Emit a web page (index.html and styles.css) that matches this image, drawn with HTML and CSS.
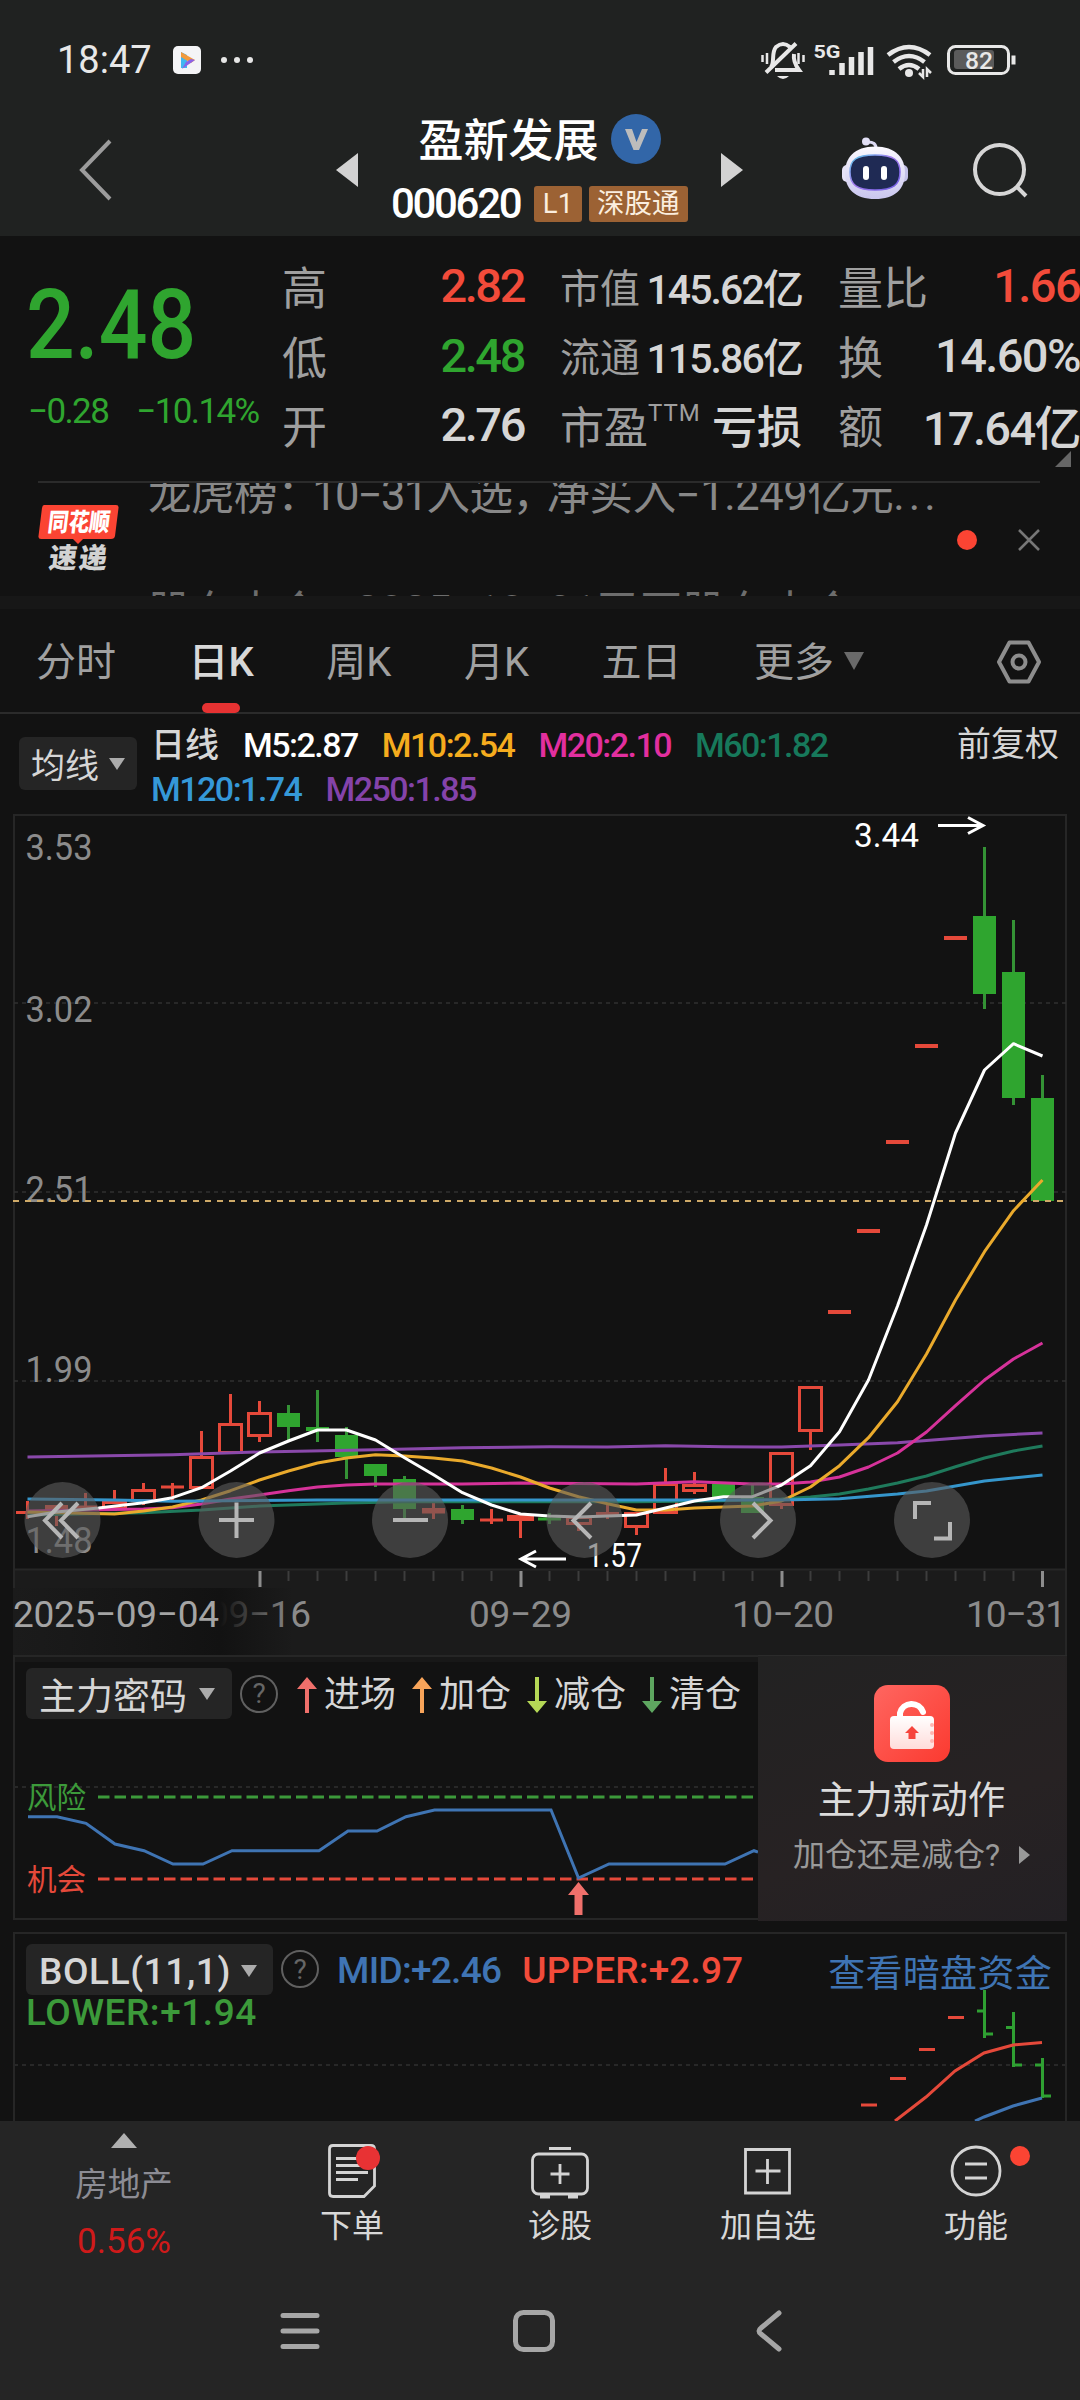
FILE: index.html
```html
<!DOCTYPE html>
<html lang="zh-CN">
<head>
<meta charset="utf-8">
<title>盈新发展 000620</title>
<link rel="stylesheet" href="styles.css">
</head>
<body>
<header class="top">
  <div class="status">
    <span class="clock">18:47</span>
    <svg class="app-icon" width="28" height="28" viewBox="0 0 28 28"><rect width="28" height="28" rx="5" fill="#f4f4f6"/><path d="M8 6L14 9V22L8 22Z" fill="#41b7f0"/><path d="M8 6L22 14L18 17L8 11Z" fill="#f29a3c"/><path d="M22 14L9 23L13 16L18 13Z" fill="#8b62e8"/></svg>
    <svg width="34" height="8" viewBox="0 0 34 8" fill="#e6e6e6"><circle cx="4" cy="4" r="3"/><circle cx="17" cy="4" r="3"/><circle cx="30" cy="4" r="3"/></svg>
    <svg class="status-icons" width="260" height="44" viewBox="760 38 260 44" fill="none" stroke="#e8e8e8">
      <path d="M771 67C775 62 771 53 776 47Q783 41 790 47M794 54C793 61 796 66 799 70H775" stroke-width="4"/>
      <path d="M766 72.500L796 43.500" stroke-width="4"/>
      <path d="M762.500 55V62M767 53V64M798.500 53V64M803.500 55V62" stroke-width="2.500"/>
      <path d="M777 76H789Q783 82 777 76Z" fill="#e8e8e8" stroke="none"/>
      <text x="813.500" y="57.500" class="net" textLength="27" lengthAdjust="spacingAndGlyphs">5G</text>
      <path d="M832 75V70M842 75V63M851.500 75V57M861 75V52M870.500 75V47" stroke-width="5.500"/>
      <path d="M888 55Q909 39 930 55M893.500 62Q909 50 924.500 62M899 69Q909 61 919 69" stroke-width="4.500"/>
      <circle cx="909" cy="73" r="4" fill="#e8e8e8" stroke="none"/>
      <path d="M923 69V77L919 73M927 77V69L931 73" stroke-width="2.500"/>
      <rect x="948.500" y="46.500" width="60" height="27" rx="7" stroke-width="3"/>
      <rect x="954" y="50" width="40" height="19" rx="3" fill="#5b5b5b" stroke="none"/>
      <path d="M1013.500 55.500V64.500" stroke-width="4"/>
      <text x="965" y="68.500" class="battery" textLength="28" lengthAdjust="spacingAndGlyphs">82</text>
    </svg>
  </div>
  <div class="titlebar">
    <svg class="back" width="36" height="62" viewBox="0 0 36 62" fill="none" stroke="#9c9c9c" stroke-width="4"><path d="M32 2L4 31L32 60"/></svg>
    <svg class="prev" width="22" height="34" viewBox="0 0 22 34"><path d="M22 0V34L0 17Z" fill="#d2d2d2"/></svg>
    <div class="stock">
      <div class="stock-name"><span>盈新发展</span><svg width="50" height="50" viewBox="0 0 50 50"><circle cx="25" cy="25" r="25" fill="#3266a8"/><path d="M14 15H21L25.500 28L31 15H37L28 36H22.500Z" fill="#bcbcbc"/></svg></div>
      <div class="stock-code"><span class="code">000620</span><span class="tag">L1</span><span class="tag">深股通</span></div>
    </div>
    <svg class="next" width="22" height="34" viewBox="0 0 22 34"><path d="M0 0V34L22 17Z" fill="#d2d2d2"/></svg>
    <svg class="robot" width="68" height="64" viewBox="841 136 68 64">
      <defs>
        <linearGradient id="shell" x1="0" y1="0" x2="0" y2="1"><stop offset="0" stop-color="#fbf9ff"/><stop offset="1" stop-color="#c9c6ee"/></linearGradient>
        <linearGradient id="rim" x1="0" y1="0" x2="1" y2="1"><stop offset="0" stop-color="#55c9e8"/><stop offset=".45" stop-color="#a57bf0"/><stop offset="1" stop-color="#6a5ae0"/></linearGradient>
      </defs>
      <path d="M866 141Q877 140 876 149" fill="none" stroke="#dcdaf3" stroke-width="3"/><circle cx="866" cy="140.500" r="4" fill="#e2e0f6"/>
      <rect x="842" y="164" width="10" height="17" rx="5" fill="#e6e3f8"/><rect x="898" y="164" width="10" height="17" rx="5" fill="#c3c0e8"/>
      <path d="M875 145.500C896 145.500 905 157 905 172C905 188 895 198 875 198C855 198 845 188 845 172C845 157 854 145.500 875 145.500Z" fill="url(#shell)"/>
      <path d="M875 154C894 154 900 159 900 171C900 184 893 189 875 189C857 189 850 184 850 171C850 159 856 154 875 154Z" fill="#1f2a54" stroke="url(#rim)" stroke-width="1.500"/>
      <rect x="863" y="165" width="6" height="14" rx="3" fill="#fff"/><rect x="881" y="165" width="6" height="14" rx="3" fill="#fff"/>
    </svg>
    <svg class="search" width="56" height="56" viewBox="972 141 56 56" fill="none" stroke="#d6d6d6" stroke-width="4"><circle cx="999.500" cy="168.500" r="24.500"/><path d="M1016 185L1026 195"/></svg>
  </div>
</header>

<section class="quote">
  <div class="price"><div class="last">2.48</div><div class="change"><span>−0.28</span><span>−10.14%</span></div></div>
  <dl class="stats">
    <div><dt>高</dt><dd class="up">2.82</dd></div>
    <div><dt>低</dt><dd class="down">2.48</dd></div>
    <div><dt>开</dt><dd>2.76</dd></div>
  </dl>
  <dl class="stats compact">
    <div><dt>市值</dt><dd>145.62亿</dd></div>
    <div><dt>流通</dt><dd>115.86亿</dd></div>
    <div><dt class="pe">市盈<sup>TTM</sup></dt><dd class="loss">亏损</dd></div>
  </dl>
  <dl class="stats wide">
    <div><dt>量比</dt><dd class="up">1.66</dd></div>
    <div><dt>换</dt><dd>14.60%</dd></div>
    <div><dt>额</dt><dd>17.64亿</dd></div>
  </dl>
  <i class="corner"></i>
</section>

<section class="news">
  <svg class="news-logo" width="84" height="70" viewBox="38 504 84 70">
    <path d="M45 505H117Q120 505 119.500 508L116 536Q115.500 539 112 539H84L79 544L74 539H42Q39 539 39.500 536L43 508Q43.500 505 45 505Z" fill="#fb4433"/>
    <text class="logo-a" transform="translate(48 531) skewX(-7)" textLength="62" lengthAdjust="spacingAndGlyphs">同花顺</text>
    <text class="logo-b" transform="translate(49 568) skewX(-7)" textLength="58">速递</text>
  </svg>
  <div class="ticker"><p>龙虎榜<span class="colon">：</span><span class="date">10−31</span>入选<span class="comma">，</span>净买入−1.249亿元<span class="ellipsis">...</span></p><p class="incoming">股东大会<span class="colon">：</span>2025−10−31召开股东大会</p></div>
  <i class="dot"></i>
  <svg width="22" height="22" viewBox="0 0 22 22" stroke="#777" stroke-width="2.500"><path d="M1 1L21 21M21 1L1 21"/></svg>
</section>

<nav class="tabs">
  <span>分时</span><span class="active">日K</span><span>周K</span><span>月K</span><span>五日</span><span class="more">更多<i class="caret"></i></span>
  <svg class="settings" width="46" height="44" viewBox="0 0 46 44" fill="none" stroke="#8d8d8d" stroke-width="4"><path d="M13.500 2.500H32.500L43 22L32.500 41.500H13.500L3 22Z" stroke-linejoin="round"/><circle cx="23" cy="22" r="6.500"/></svg>
</nav>

<section class="ma">
  <button class="pill">均线<i class="caret"></i></button>
  <div class="ma-list">
    <span class="c-day">日线</span><span class="c5">M5:2.87</span><span class="c10">M10:2.54</span><span class="c20">M20:2.10</span><span class="c60">M60:1.82</span>
    <span class="c120">M120:1.74</span><span class="c250">M250:1.85</span>
  </div>
  <span class="adjust">前复权</span>
</section>

<svg class="kline" width="1080" height="843" viewBox="0 812 1080 843">
  <defs><linearGradient id="fade"><stop offset="0" stop-color="#1b1b1b"/><stop offset=".2" stop-color="#191919"/><stop offset=".74" stop-color="#121212"/><stop offset="1" stop-color="#121212" stop-opacity="0"/></linearGradient></defs>
  <rect x="13" y="1570" width="1054" height="85" fill="#1b1b1b"/>
  <path class="frame" d="M14 1655V815H1066V1655M14 1569.500H1066"/>
  <path class="grid" d="M14 1003H1066M14 1192H1066M14 1381H1066"/>
  <g class="axis-y">
    <text x="25.500" y="860" textLength="67" lengthAdjust="spacingAndGlyphs">3.53</text><text x="25.500" y="1022" textLength="67" lengthAdjust="spacingAndGlyphs">3.02</text><text x="25.500" y="1202" textLength="67" lengthAdjust="spacingAndGlyphs">2.51</text><text x="25.500" y="1382" textLength="67" lengthAdjust="spacingAndGlyphs">1.99</text><text x="25.500" y="1553" textLength="67" lengthAdjust="spacingAndGlyphs">1.48</text>
  </g>
  <g class="axis-x">
    <path class="tick" d="M288.500 1571V1581M317.500 1571V1581M346.500 1571V1581M375.500 1571V1581M404.500 1571V1581M433.500 1571V1581M462.500 1571V1581M491.500 1571V1581M549.500 1571V1581M578.500 1571V1581M607.500 1571V1581M636.500 1571V1581M665.500 1571V1581M694.500 1571V1581M723.500 1571V1581M752.500 1571V1581M810.500 1571V1581M839.500 1571V1581M868.500 1571V1581M897.500 1571V1581M926.500 1571V1581M955.500 1571V1581M984.500 1571V1581M1013.500 1571V1581"/>
    <path class="tick-major" d="M260 1571V1587M521 1571V1587M782 1571V1587M1042.500 1571V1587"/>
    <text x="208" y="1627" textLength="103">09−16</text>
    <rect x="13" y="1588" width="280" height="67" fill="url(#fade)"/>
    <text x="469" y="1627" textLength="103">09−29</text><text x="732" y="1627" textLength="102">10−20</text><text x="966" y="1627" textLength="100">10−31</text>
    <text class="first" x="13" y="1627" textLength="206">2025−09−04</text>
  </g>
  <path class="k-down-wick" d="M288.500 1405V1440M317.500 1390V1442M346.500 1427V1479M375.500 1464V1487M404.500 1476V1519M462.500 1505V1524M549.500 1513V1524M752.500 1485V1513M984.500 847V1009M1013.500 920V1105M1042.500 1075V1201"/>
  <path class="k-down" d="M277 1413h23v14h-23zM306 1427h23v4h-23zM335 1435h23v22h-23zM364 1464h23v12h-23zM393 1479h23v30h-23zM451 1509h23v11h-23zM538 1517.500h23v3h-23zM712 1484h23v13h-23zM741 1497h23v16h-23zM973 916h23v78h-23zM1002 972h23v126h-23zM1031 1098h23v103h-23z"/>
  <path class="k-up" d="M16 1512.500H39M27.500 1501V1519M45 1506.500H68M45 1508.500H68M56.500 1507V1526M74 1507H97M85.500 1493V1510M103.500 1502.500h22v6h-22zM114.500 1490V1502M132.500 1490.500h22v10h-22zM143.500 1483V1490M143.500 1500V1505M161 1487H184M172.500 1483V1500M190.500 1457.500h22v30h-22zM201.500 1431V1457M219.500 1424.500h22v28h-22zM230.500 1394V1424M248.500 1413.500h22v22h-22zM259.500 1401V1413M259.500 1435V1442M422 1509.500H445M422 1512H445M433.500 1503V1519M480 1520H503M491.500 1509V1524M508.500 1516.500h24v3h-24zM520.500 1518V1538M567.500 1517.500h23v6h-23zM578.500 1524V1531M596 1513.500H619M607.500 1505V1519M625.500 1513.500h22v13h-22zM636.500 1527V1535M654.500 1484.500h22v28h-22zM665.500 1468V1484M683.500 1485.500h22v5h-22zM694.500 1472V1485M694.500 1491V1494M770.500 1453.500h22v51h-22zM781.500 1505V1509M799.500 1387.500h22v43h-22zM810.500 1431V1450"/>
  <path class="k-limit" d="M828 1312H851M857 1231H880M886 1142H909M915 1046H938M944 938H967"/>
  <path class="last-line" d="M13 1201H1066"/>
  <g class="lines">
    <polyline stroke="#8a49ab" points="27.500,1457 172.500,1454.700 259.500,1452 375.500,1449.700 462.500,1447.700 549.500,1446.700 607.500,1447 665.500,1445.700 723.500,1446.700 781.500,1447 839.500,1445 897.500,1442.700 984.500,1436 1042.500,1433"/>
    <polyline stroke="#1f7a5c" points="27.500,1515 143.500,1512.700 201.500,1510 259.500,1506 346.500,1503 404.500,1501.700 636.500,1501.700 723.500,1500.700 781.500,1499 810.500,1497 839.500,1494 868.500,1489 897.500,1483 926.500,1476 955.500,1466.700 984.500,1458 1013.500,1451 1042.500,1446"/>
    <polyline stroke="#d6329a" points="27.500,1511 143.500,1509 172.500,1507.700 201.500,1504 230.500,1499 259.500,1495 288.500,1490.700 317.500,1487 346.500,1485 375.500,1484 462.500,1484 520.500,1483 636.500,1484 694.500,1481.700 752.500,1484 781.500,1484 810.500,1482 839.500,1477 868.500,1467 897.500,1453 926.500,1432 955.500,1405.700 984.500,1380 1013.500,1359 1042.500,1343"/>
    <polyline stroke="#eaaa2c" points="27.500,1512 114.500,1514 143.500,1511 172.500,1507 201.500,1500 230.500,1490.700 259.500,1480 288.500,1471 317.500,1463 346.500,1458 375.500,1454.700 404.500,1456 433.500,1458 462.500,1461 491.500,1468 520.500,1477 549.500,1488 578.500,1496.700 607.500,1503.700 636.500,1510 665.500,1510 694.500,1508 723.500,1507 752.500,1506 781.500,1501 810.500,1487 839.500,1465.700 868.500,1437.700 897.500,1401.700 926.500,1354 955.500,1300 984.500,1251.700 1013.500,1210.700 1042.500,1180"/>
    <polyline stroke="#3596cc" points="27.500,1499 114.500,1500 172.500,1501.300 317.500,1500 781.500,1500 839.500,1498.700 897.500,1494 926.500,1491 955.500,1486 984.500,1481 1042.500,1475"/>
    <polyline stroke="#fff" points="27.500,1516.700 56.500,1512 98.600,1508 143.500,1502.700 172.500,1497.700 201.500,1487.700 230.500,1471 259.500,1453 288.500,1441 317.500,1430 346.500,1430 375.500,1440 404.500,1457.700 433.500,1474.700 462.500,1492.700 491.500,1505 520.500,1514 549.500,1516 578.500,1517 607.500,1516 636.500,1515 665.500,1508 694.500,1501 723.500,1496.700 752.500,1496.700 781.500,1485 810.500,1465.700 839.500,1431.700 868.500,1380 897.500,1306 926.500,1225 955.500,1133 984.500,1070 1013.500,1043.700 1042.500,1056"/>
  </g>
  <g class="marks">
    <text x="854" y="847" textLength="65" lengthAdjust="spacingAndGlyphs">3.44</text><path d="M938 825.500H983M968 817.500L983 825.500L968 833.500"/>
    <text x="587" y="1567" textLength="55" lengthAdjust="spacingAndGlyphs">1.57</text><path d="M566 1559H521M536 1551L521 1559L536 1567"/>
  </g>
  <g class="tools">
    <circle cx="62.500" cy="1520" r="38"/><circle cx="236.500" cy="1520" r="38"/><circle cx="410" cy="1520" r="38"/><circle cx="584.500" cy="1520" r="38"/><circle cx="758" cy="1520" r="38"/><circle cx="932" cy="1520" r="38"/>
    <path d="M62 1503L45 1520.500L62 1538M78 1503L61 1520.500L78 1538M219 1520H254M236.500 1502.500V1538M393 1520H428M591 1503L573.500 1520.500L591 1538M753 1503L770.500 1520.500L753 1538M915 1519V1503H931M934 1538.500H950V1522"/>
  </g>
</svg>

<section class="signal">
  <div class="signal-chart">
    <div class="bar">
      <button class="pill">主力密码<i class="caret"></i></button>
      <span class="help">?</span>
      <span class="key"><svg width="20" height="36" viewBox="0 0 20 36" fill="#f0706b"><path d="M10 0L20 12H12V36H8V12H0Z"/></svg>进场</span>
      <span class="key"><svg width="20" height="36" viewBox="0 0 20 36" fill="#f8a45a"><path d="M10 0L20 12H12V36H8V12H0Z"/></svg>加仓</span>
      <span class="key"><svg width="20" height="36" viewBox="0 0 20 36" fill="#b5d856"><path d="M10 36L20 24H12V0H8V24H0Z"/></svg>减仓</span>
      <span class="key"><svg width="20" height="36" viewBox="0 0 20 36" fill="#5ea660"><path d="M10 36L20 24H12V0H8V24H0Z"/></svg>清仓</span>
    </div>
    <svg width="743" height="198" viewBox="15 1721 743 198">
      <path class="grid" d="M14 1787H758"/>
      <g class="zone"><text x="27" y="1808" fill="#3c9a3a">风险</text><text x="27" y="1890" fill="#e5493a">机会</text></g>
      <path d="M98 1797H754" stroke="#3c9a3a" stroke-width="3" stroke-dasharray="11.500 5"/>
      <path d="M98 1879H754" stroke="#e5493a" stroke-width="3" stroke-dasharray="11.500 5"/>
      <polyline fill="none" stroke="#3f74b3" stroke-width="3" points="28,1816.700 57,1816.700 86,1823.300 115,1844 144,1850.700 173,1864 203,1864 232,1850.700 319,1850.700 348,1831 377,1831 406,1816.700 434.500,1810 551,1810 578.500,1878 609,1864 725,1864 754,1850.700 758,1852"/>
      <path d="M578.500 1882L589 1895H582.500V1915H574.500V1895H568Z" fill="#f0706b"/>
    </svg>
  </div>
  <aside class="promo">
    <svg width="76" height="77" viewBox="0 0 76 77">
      <defs><linearGradient id="red" x1="0" y1="0" x2="1" y2="1"><stop offset="0" stop-color="#ff6660"/><stop offset="1" stop-color="#fb3a30"/></linearGradient><linearGradient id="lock" x1="0" y1="0" x2="0" y2="1"><stop offset="0" stop-color="#fff"/><stop offset="1" stop-color="#ffdcda"/></linearGradient></defs>
      <rect width="76" height="77" rx="14" fill="url(#red)"/>
      <path d="M26 33V28A12 12 0 0 1 49 27" fill="none" stroke="#fff" stroke-width="6" stroke-linecap="round"/>
      <rect x="16" y="31" width="44" height="33" rx="4" fill="url(#lock)"/>
      <path d="M38 41L45 48H41.500V54H34.500V48H31Z" fill="#f6443c"/>
      <g fill="#ffb5b1"><circle cx="58" cy="40" r="2"/><circle cx="58" cy="48" r="2"/><circle cx="58" cy="56" r="2"/></g>
    </svg>
    <h3>主力新动作</h3>
    <p>加仓还是减仓?<i></i></p>
  </aside>
</section>

<section class="boll">
  <div class="bar">
    <button class="pill">BOLL(11,1)<i class="caret"></i></button>
    <span class="help">?</span>
    <span class="mid">MID:+2.46</span><span class="upper">UPPER:+2.97</span><a>查看暗盘资金</a>
  </div>
  <div class="lower">LOWER:+1.94</div>
  <svg class="boll-plot" width="1054" height="133" viewBox="13 1988 1054 133">
    <path class="grid" d="M14 2065H1066"/>
    <path d="M861 2105H877M890 2078.500H906M919 2049.500H935M948 2017.500H964" stroke="#e5493a" stroke-width="3"/>
    <path d="M984.500 1990V2038M977 2011H984M984 2034H993M1013.500 2012V2067M1006 2027.500H1013M1013 2065H1022M1042.500 2058V2098M1035 2065H1042M1042 2096H1051" stroke="#2fa032" stroke-width="3"/>
    <g fill="none" stroke-width="3"><polyline stroke="#e5493a" points="895,2121 926,2097 955,2071 984,2053 1013,2045 1042,2042.500"/><polyline stroke="#3f74b3" points="975,2121 984,2117 1013,2106 1042,2098"/></g>
  </svg>
</section>

<footer>
  <div class="actions">
    <div class="sector"><svg width="26" height="15" viewBox="0 0 26 15"><path d="M13 0L26 15H0Z" fill="#b0b0b0"/></svg><span>房地产</span><b>0.56%</b></div>
    <div class="action"><svg width="60" height="60" viewBox="322 2141 60 60"><path d="M333 2145.500H371Q374.500 2145.500 374.500 2149V2186L364 2196.500H333Q329.500 2196.500 329.500 2193V2149Q329.500 2145.500 333 2145.500ZM336 2158.500H368M336 2165.500H368M336 2172.500H368M336 2179.500H358"/><circle class="badge" cx="368" cy="2158" r="12"/></svg>下单</div>
    <div class="action"><svg width="60" height="60" viewBox="530 2141 60 60"><rect x="532.500" y="2154" width="55" height="40" rx="6"/><path d="M549 2148.500H571M560 2164V2184M550.500 2174H569.500"/><path d="M540 2196.500H550M568 2196.500H578" stroke-width="4"/></svg>诊股</div>
    <div class="action"><svg width="60" height="60" viewBox="738 2141 60 60"><path d="M745.500 2149.500H789.500V2193H745.500ZM767.500 2159V2184M755.500 2171H780.500"/></svg>加自选</div>
    <div class="action"><svg width="60" height="60" viewBox="946 2141 60 60"><circle cx="976" cy="2171" r="24"/><path d="M965 2164H987M965 2178H987"/></svg>功能<i class="dot"></i></div>
  </div>
  <div class="sysnav">
    <svg width="40" height="44" viewBox="281 2309 40 44"><path d="M284 2315.500H318M284 2331H318M284 2346.500H318"/></svg>
    <svg width="44" height="44" viewBox="513 2309 44 44"><rect x="516.500" y="2312.500" width="37" height="37" rx="8"/></svg>
    <svg width="30" height="44" viewBox="755 2309 30 44"><path d="M780 2313L762 2328Q758 2331 762 2334L780 2349"/></svg>
  </div>
</footer>
</body>
</html>
```
FILE: styles.css
```css
* { box-sizing: border-box; margin: 0; padding: 0; }
body {
  width: 1080px; height: 2400px; overflow: hidden;
  background: #121212; color: #d6d6d6;
  font-family: Roboto, "Noto Sans CJK SC", sans-serif;
}
svg { display: block; flex: none; }
i { font-style: normal; }
button { border: 0; color: inherit; font: inherit; }

/* status bar and title */
.top { height: 236px; background: #202221; }
.status { display: flex; align-items: center; height: 88px; padding: 32px 60px 0 57px; color: #e8e8e8; }
.clock { width: 116px; font-size: 38px; line-height: 44px; }
.app-icon { margin-right: 19px; }
.status-icons { margin-left: auto; }
.net { font-size: 19px; font-weight: 700; fill: #e8e8e8; stroke: none; }
.battery { font-size: 24px; font-weight: 500; fill: #e8e8e8; stroke: none; }
.titlebar { display: flex; align-items: center; height: 148px; padding: 16px 52px 0 78px; }
.prev { margin-left: 222px; }
.stock { width: 363px; height: 132px; padding-top: 10px; display: flex; flex-direction: column; align-items: center; }
.stock-name { display: flex; align-items: center; gap: 12px; height: 50px; font-size: 45px; line-height: 50px; font-weight: 500; color: #fff; }
.stock-name span { padding-top: 5px; }
.stock-code { display: flex; align-items: center; gap: 7px; height: 36px; margin-top: 22px; color: #fff; }
.code { margin-right: 7px; font-size: 42px; font-weight: 500; letter-spacing: -2.3px; line-height: 36px; }
.tag { padding: 0 8.500px; border-radius: 3px; background: #9c6234; color: #fbeedf; font-size: 27.500px; line-height: 36px; }
.robot { margin-left: 98px; margin-bottom: 3px; }
.search { margin-left: 63px; }

/* quote */
.quote { position: relative; display: grid; grid-template-columns: 252px 240px 240px 240px; height: 245px; padding: 15px 0 0 30px; }
.last { margin-left: -4px; transform: scaleX(.885); transform-origin: left; color: #2fa52f; font-size: 97px; font-weight: 500; line-height: 100px; padding-top: 24px; }
.change { display: flex; gap: 28px; margin-left: -2px; margin-top: 17px; color: #2fa52f; font-size: 35px; line-height: 40px; letter-spacing: -1.600px; white-space: nowrap; }
.stats + .stats { margin-left: 38px; width: 240px; }
.stats ~ .stats ~ .stats { margin-left: 76px; }
.stats > div { display: flex; justify-content: space-between; height: 69.500px; align-items: center; white-space: nowrap; }
.stats dt { font-size: 45px; color: #9f9f9f; }
.stats dd { font-size: 47px; font-weight: 500; letter-spacing: -2.400px; margin-right: -2px; }
.stats.wide dd { letter-spacing: -1.600px; }
.compact dt { font-size: 40px; }
.compact dd { font-size: 41px; letter-spacing: -1.900px; }
.compact .pe { display: flex; font-size: 44px; }
.pe sup { font-size: 24px; line-height: 40px; letter-spacing: 1px; }
.compact .loss { font-size: 45px; letter-spacing: 0; }
.stats dd.up { color: #f24b3a; }
.stats dd.down { color: #2fa52f; }
.corner { position: absolute; left: 1055px; top: 215px; border-left: 16px solid transparent; border-bottom: 16px solid #666; }

/* news ticker */
.news { display: flex; align-items: center; height: 115px; margin: 0 40px 0 38px; border-top: 2px solid #2b2b2b; }
.news-logo { margin: 0 0 1px -1px; }
.logo-a { font-size: 25px; font-weight: 900; fill: #fff; }
.logo-b { font-size: 28px; font-weight: 900; fill: #d2d2d2; }
.ticker { width: 806px; height: 113px; margin-left: 27px; overflow: hidden; font-size: 43.500px; color: #888; }
.ticker p { height: 117px; margin-top: -14px; line-height: 54px; white-space: nowrap; letter-spacing: -.450px; }
.ticker .incoming { margin-top: 0; color: #6d6d6d; }
.colon { margin-right: -8px; }
.date { letter-spacing: -1.700px; }
.comma { margin-right: -9px; }
.ellipsis { letter-spacing: 4px; }
.dot { flex: none; width: 20px; height: 20px; border-radius: 50%; background: #fb4433; }
.news .dot { margin-right: auto; margin-left: 3px; }

/* period tabs */
.tabs { display: flex; align-items: center; height: 118px; padding: 2px 38px 0 36px; border-top: 13px solid #171717; border-bottom: 2px solid #2b2b2b; color: #a0a0a0; font-size: 40px; line-height: 50px; }
.tabs > span { padding-top: 2px; }
.tabs > span + span { margin-left: 72.500px; }
.tabs > .active { position: relative; color: #d8d8d8; font-weight: 500; }
.active::after { content: ""; position: absolute; left: 13px; bottom: -25px; width: 38px; height: 10px; border-radius: 5px; background: #e63232; }
.caret { display: inline-block; border: 8px solid transparent; border-top: 12px solid #ababab; border-bottom: 0; vertical-align: middle; }
.more .caret { margin: -8px 0 0 10px; border-width: 18px 10px 0; border-top-color: #6a6a6a; }
.settings { margin-left: auto; }

/* moving averages legend */
.ma { display: flex; height: 98px; padding: 12px 20px 0 19px; font-size: 34px; }
.pill { display: flex; align-items: center; height: 53px; margin-top: 11px; padding: 0 12px; gap: 10px; border-radius: 6px; background: #252525; font-size: 34px; white-space: nowrap; }
.ma-list { flex: 1; display: flex; flex-wrap: wrap; align-content: flex-start; column-gap: 24px; margin: -3px 0 0 14px; padding-right: 100px; font-weight: 500; line-height: 44px; letter-spacing: -1.520px; }
.adjust { margin: -3px 1px 0 0; line-height: 42px; }
.c5 { color: #fff; } .c10 { color: #f5ac1e; } .c20 { color: #e22f9f; } .c60 { color: #17795b; } .c120 { color: #3598d8; } .c250 { color: #8443aa; }
.c-day { letter-spacing: 0; }

/* candlestick chart */
.frame { fill: none; stroke: #262626; stroke-width: 2; }
.grid { fill: none; stroke: #303030; stroke-width: 1.500; stroke-dasharray: 4 4; }
.axis-y text { font-size: 37px; fill: #8b8b8b; }
.axis-x text { font-size: 37px; fill: #8b8b8b; }
.axis-x .first { fill: #a4a4a4; }
.tick { stroke: #3d3d3d; stroke-width: 2; }
.tick-major { stroke: #8d8d8d; stroke-width: 3; }
.k-down-wick { stroke: #349235; stroke-width: 3; }
.k-down { fill: #2fa52f; }
.k-up { fill: none; stroke: #e5493a; stroke-width: 3; }
.k-limit { stroke: #e5493a; stroke-width: 4; }
.last-line { stroke: #cfaa68; stroke-width: 2; stroke-dasharray: 6 6; }
.lines { fill: none; stroke-width: 3; stroke-linejoin: round; }
.marks { fill: none; stroke: #fff; stroke-width: 3; }
.marks text { font-size: 33px; fill: #fff; stroke: none; }
.tools circle { fill: rgba(91, 91, 91, .6); }
.tools path { fill: none; stroke: #b6b6b6; stroke-width: 4; }

/* signal indicator */
.signal { display: flex; height: 266px; margin: 0 13px; }
.signal-chart { width: 745px; height: 265px; border: 2px solid #262626; border-right: 0; overflow: hidden; background: linear-gradient(#181818 5px, #121212 5px); }
.bar { display: flex; align-items: center; height: 64px; padding: 0 0 0 11px; white-space: nowrap; }
.bar .pill { height: 51px; margin: 9px 0 0; padding: 1px 17px 0 13px; font-size: 37px; gap: 12px; }
.help { display: grid; place-items: center; flex: none; width: 38px; height: 38px; margin: 9px 10px 0 8px; border: 2.500px solid #606060; border-radius: 50%; color: #666; font-size: 28px; }
.key { display: flex; align-items: center; gap: 7px; width: 115px; flex: none; margin-top: 11px; padding-left: 9px; font-size: 36px; line-height: 40px; }
.promo { display: flex; flex-direction: column; align-items: center; width: 309px; height: 266px; padding: 29px 2px 0 0; background: linear-gradient(160deg, #222, #272223 60%, #232024); border-top: 1px solid #2b2b2b; }
.promo h3 { margin-top: 16px; color: #dcdcdc; font-size: 37.500px; font-weight: 400; line-height: 44px; }
.promo p { display: flex; align-items: center; margin-top: 15px; color: #999; font-size: 32px; line-height: 36px; }
.promo p i { margin-left: 19px; border: 9px solid transparent; border-left: 11px solid #999; border-right: 0; }
.zone text { font-size: 29.500px; }

/* bollinger panel */
.boll { position: relative; height: 189px; margin: 11px 13px 0; border: 2px solid #262626; border-bottom: 0; overflow: hidden; }
.boll .bar { height: 61px; padding-right: 13px; font-size: 37px; font-weight: 500; }
.boll .bar .pill { width: 247px; gap: 10px; padding-top: 4px; font-weight: 500; letter-spacing: .600px; }
.boll .help { font-weight: 400; }
.mid, .upper, .boll a { margin-top: 12px; }
.mid { margin-left: 8px; color: #3f74b3; letter-spacing: -.700px; }
.upper { margin-left: 21px; color: #f24b3a; letter-spacing: .150px; }
.boll a { margin-left: auto; color: #3f74b3; letter-spacing: .300px; font-weight: 400; }
.lower { margin-top: -3px; padding-left: 11px; color: #3c9a3a; font-size: 37px; font-weight: 500; line-height: 42px; letter-spacing: .550px; }
.boll-plot { position: absolute; left: -2px; bottom: 0; }

/* bottom bars */
footer { height: 279px; background: #252525; }
.actions { display: grid; grid-template-columns: 248px repeat(4, 208px); height: 170px; }
.sector { display: flex; flex-direction: column; align-items: center; padding-top: 12px; color: #8c8c94; font-size: 32.500px; line-height: 40px; }
.sector span { margin-top: 17px; }
.sector b { margin-top: 17px; color: #d01a1a; font-size: 35px; font-weight: 400; }
.action { position: relative; display: flex; flex-direction: column; align-items: center; padding-top: 20px; font-size: 32px; line-height: 51px; color: #d8d8d8; }
.action svg { fill: none; stroke: #d4d4d4; stroke-width: 2.800; }
.action .badge { fill: #e83234; stroke: none; }
.action .dot { position: absolute; left: 138px; top: 25px; }
.sysnav { display: flex; padding: 18px 0 0 280px; fill: none; stroke: #a6a6a6; stroke-width: 5; stroke-linecap: round; }
.sysnav svg:nth-child(2) { margin-left: 192px; }
.sysnav svg:nth-child(3) { margin-left: 198px; }
```
